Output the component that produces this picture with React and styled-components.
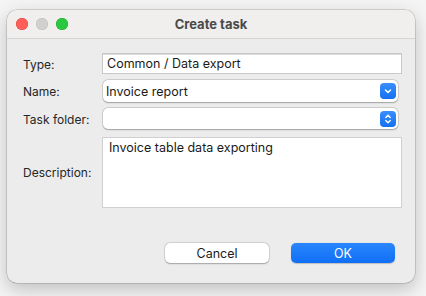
import React from "react";
import styled, { createGlobalStyle } from "styled-components";

const Global = createGlobalStyle`
  html, body { margin: 0; padding: 0; }
  body {
    background: #f4f4f4;
    font-family: "Inter", "Liberation Sans", Arial, sans-serif;
    width: 426px;
    height: 296px;
    overflow: hidden;
  }
`;

const Page = styled.div`
  padding: 10px 11px 13px 7px;
`;

const Window = styled.div`
  width: 408px;
  height: 273px;
  border-radius: 10px;
  background: #ececec;
  box-shadow: 0 0 0 0.5px rgba(0,0,0,0.25), 0 6px 18px rgba(0,0,0,0.22);
  display: flex;
  flex-direction: column;
  overflow: hidden;
`;

const TitleBar = styled.div`
  height: 28px;
  background: #f0efee;
  border-bottom: 1px solid #d6d6d6;
  display: flex;
  align-items: center;
  position: relative;
  flex-shrink: 0;
`;

const Lights = styled.div`
  display: flex;
  gap: 8px;
  padding-left: 9px;
`;

const Light = styled.span`
  width: 12px;
  height: 12px;
  border-radius: 50%;
  background: ${p => p.$c};
  box-shadow: inset 0 0 0 0.5px ${p => p.$b};
`;

const Title = styled.div`
  position: absolute;
  left: 0;
  right: 0;
  text-align: center;
  font-size: 13px;
  font-weight: 700;
  color: #4a4a4a;
  pointer-events: none;
`;

const Body = styled.div`
  flex: 1;
  padding: 14px 13px 20px 16px;
  display: flex;
  flex-direction: column;
`;

const Form = styled.div`
  display: grid;
  grid-template-columns: 79px 1fr;
  row-gap: 6px;
  align-items: center;
`;

const Label = styled.div`
  font-size: 12px;
  color: #262626;
  padding-top: 1px;
`;

const TextField = styled.div`
  height: 19px;
  background: #fff;
  border: 0.5px solid #c8c8c8;
  box-shadow: inset 0 0.5px 0 #b8b8b8;
  font-size: 12.5px;
  color: #1a1a1a;
  display: flex;
  align-items: center;
  padding-left: 4px;
`;

const Select = styled.div`
  height: ${p => p.$h}px;
  margin: 0 4px 0 1px;
  background: #fff;
  border-radius: 5px;
  box-shadow: 0 0 0 0.5px rgba(0,0,0,0.18), 0 0.5px 1.5px rgba(0,0,0,0.25);
  display: flex;
  align-items: center;
  justify-content: space-between;
  padding: 0 2px 0 3px;
  font-size: 12.5px;
  color: #1a1a1a;
`;

const SelectBtn = styled.span`
  width: 16px;
  height: 16px;
  border-radius: 4px;
  background: linear-gradient(#3a8ffb, #1570f2);
  display: flex;
  align-items: center;
  justify-content: center;
`;

const TextArea = styled.div`
  height: 71px;
  margin-top: 2px;
  background: #fff;
  border: 0.5px solid #d0d0d0;
  font-size: 12.5px;
  color: #1a1a1a;
  padding: 2px 6px;
  box-sizing: border-box;
  line-height: 15px;
`;

const Buttons = styled.div`
  margin-top: auto;
  display: flex;
  justify-content: flex-end;
  gap: 22px;
  padding-right: 7px;
`;

const Button = styled.button`
  width: ${p => p.$w}px;
  height: 20px;
  border: none;
  border-radius: 5px;
  font-family: inherit;
  font-size: 12.5px;
  padding: 0;
  color: ${p => (p.$primary ? "#fff" : "#1a1a1a")};
  background: ${p => (p.$primary ? "linear-gradient(#2a86fc, #0f6ff5)" : "#fff")};
  box-shadow: ${p => (p.$primary
    ? "0 0.5px 1px rgba(0,0,0,0.2)"
    : "0 0 0 0.5px rgba(0,0,0,0.15), 0 0.5px 1.5px rgba(0,0,0,0.25)")};
`;

const Down = () => (
  <svg width="10" height="10" viewBox="0 0 10 10">
    <path d="M2.5 4 L5 6.5 L7.5 4" fill="none" stroke="#fff" strokeWidth="1.5" strokeLinecap="round" strokeLinejoin="round" />
  </svg>
);

const UpDown = () => (
  <svg width="10" height="12" viewBox="0 0 10 12">
    <path d="M2.8 4.5 L5 2.3 L7.2 4.5 M2.8 7.5 L5 9.7 L7.2 7.5" fill="none" stroke="#fff" strokeWidth="1.4" strokeLinecap="round" strokeLinejoin="round" />
  </svg>
);

export default function App() {
  return (
    <>
      <Global />
      <Page>
        <Window>
          <TitleBar>
            <Lights>
              <Light $c="#fe5f57" $b="#e0443e" />
              <Light $c="#d1d0cf" $b="#bdbdbd" />
              <Light $c="#28c840" $b="#1aab29" />
            </Lights>
            <Title>Create task</Title>
          </TitleBar>
          <Body>
            <Form>
              <Label>Type:</Label>
              <TextField>Common / Data export</TextField>
              <Label>Name:</Label>
              <Select $h={22}>
                <span>Invoice report</span>
                <SelectBtn><Down /></SelectBtn>
              </Select>
              <Label>Task folder:</Label>
              <Select $h={21}>
                <span></span>
                <SelectBtn><UpDown /></SelectBtn>
              </Select>
              <Label>Description:</Label>
              <TextArea>Invoice table data exporting</TextArea>
            </Form>
            <Buttons>
              <Button $w={104}>Cancel</Button>
              <Button $w={104} $primary>OK</Button>
            </Buttons>
          </Body>
        </Window>
      </Page>
    </>
  );
}
